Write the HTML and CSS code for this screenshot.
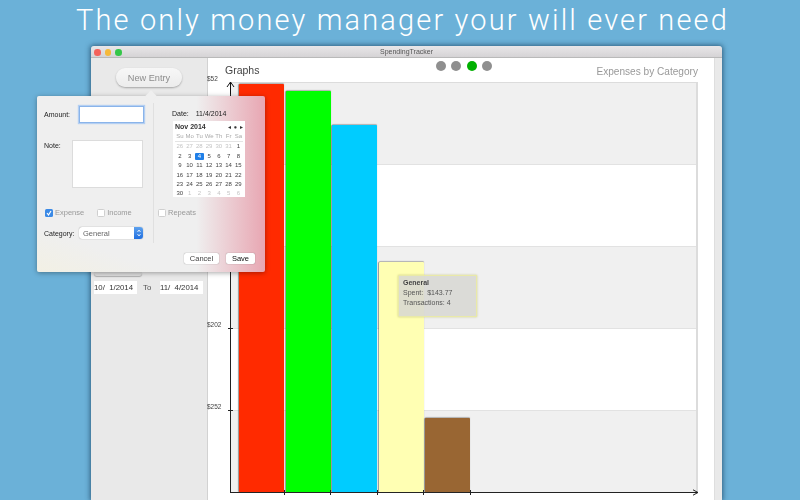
FILE: index.html
```html
<!DOCTYPE html>
<html lang="en">
<head>
  <meta charset="UTF-8">
  <title>SpendingTracker</title>
  <link rel="stylesheet" href="styles.css">
</head>
<body>
  <h1 class="headline">The only money manager your will ever need</h1>

  <div class="window">
    <div class="titlebar">
      <div class="lights">
        <span class="light red"></span>
        <span class="light yellow"></span>
        <span class="light green"></span>
      </div>
      <span class="title">SpendingTracker</span>
    </div>

    <div class="winBody">
      <aside class="sidebar">
        <button class="btnEntry">New Entry</button>
        <div class="hiddenBtn"></div>
        <div class="range">
          <span class="rangeField">10/ &nbsp;1/2014</span>
          <span class="rangeTo">To</span>
          <span class="rangeField">11/ &nbsp;4/2014</span>
        </div>
      </aside>

      <main class="content">
        <div class="chartHead">
          <span class="chartName">Graphs</span>
          <div class="dots">
            <span class="dot"></span>
            <span class="dot"></span>
            <span class="dot on"></span>
            <span class="dot"></span>
          </div>
          <span class="chartType">Expenses by Category</span>
        </div>

        <div class="plot">
          <div class="bands">
            <div class="band"></div>
            <div class="band"></div>
            <div class="band"></div>
            <div class="band"></div>
            <div class="band"></div>
          </div>
          <div class="bars">
            <div class="bar" style="height: 408px; background: #ff2a00"></div>
            <div class="bar" style="height: 401px; background: #00ff00"></div>
            <div class="bar" style="height: 367px; background: #00ccff"></div>
            <div class="bar" style="height: 230px; background: #ffffb3"></div>
            <div class="bar" style="height: 74px; background: #996633"></div>
          </div>

          <span class="yLabel l52">$52</span>
          <span class="yLabel l202">$202</span>
          <span class="yLabel l252">$252</span>
          <span class="yTick t202"></span>
          <span class="yTick t252"></span>
          <span class="xTick x1"></span>
          <span class="xTick x2"></span>
          <span class="xTick x3"></span>
          <span class="xTick x4"></span>
          <span class="xTick x5"></span>
          <svg class="arrowUp" width="9" height="13" viewBox="0 0 9 13"><path d="M1 6l3.5-5L8 6M4.5 1v12" fill="none" stroke="#111" stroke-width="1"/></svg>
          <svg class="arrowRight" width="7" height="7" viewBox="0 0 7 7"><path d="M1 .8L6 3.5 1 6.2" fill="none" stroke="#222" stroke-width="1"/></svg>

          <div class="tooltip">
            <strong>General</strong>
            <span>Spent: &nbsp;$143.77</span>
            <span>Transactions: 4</span>
          </div>
        </div>
      </main>

      <div class="strip"></div>
    </div>
  </div>

  <!-- popover from New Entry -->
  <div class="popover">
    <span class="popArrow"></span>
    <div class="popCols">
      <div class="colLeft">
        <div class="row">
          <label class="lblAmount">Amount:</label>
          <div class="inputAmount"></div>
        </div>
        <div class="row rowNote">
          <label class="lblNote">Note:</label>
          <div class="inputNote"></div>
        </div>
        <div class="row rowChecks">
          <span class="check checked">
            <svg width="8" height="8" viewBox="0 0 8 8"><path d="M2 4l1.5 2L6 2" fill="none" stroke="#fff" stroke-width="1.2"/></svg>
          </span>
          <span class="checkText">Expense</span>
          <span class="check income"></span>
          <span class="checkText">Income</span>
        </div>
        <div class="row rowCategory">
          <label class="lblAmount">Category:</label>
          <div class="select">
            <span>General</span>
            <span class="stepper">
              <svg width="8" height="12" viewBox="0 0 8 12"><path d="M2.5 5L4 3l1.5 2M2.5 7L4 9l1.5-2" fill="none" stroke="#fff" stroke-width="0.8"/></svg>
            </span>
          </div>
        </div>
      </div>

      <div class="colRight">
        <div class="dateRow">
          <label>Date:</label>
          <span>11/4/2014</span>
        </div>
        <div class="calendar">
          <div class="calHead">
            <strong>Nov 2014</strong>
            <span class="calNav">◂ ● ▸</span>
          </div>
          <div class="calGrid calDays">
            <span>Su</span><span>Mo</span><span>Tu</span><span>We</span><span>Th</span><span>Fr</span><span>Sa</span>
          </div>
          <div class="calGrid">
            <span class="off">26</span><span class="off">27</span><span class="off">28</span><span class="off">29</span><span class="off">30</span><span class="off">31</span><span>1</span>
            <span>2</span><span>3</span><span class="today">4</span><span>5</span><span>6</span><span>7</span><span>8</span>
            <span>9</span><span>10</span><span>11</span><span>12</span><span>13</span><span>14</span><span>15</span>
            <span>16</span><span>17</span><span>18</span><span>19</span><span>20</span><span>21</span><span>22</span>
            <span>23</span><span>24</span><span>25</span><span>26</span><span>27</span><span>28</span><span>29</span>
            <span>30</span><span class="off">1</span><span class="off">2</span><span class="off">3</span><span class="off">4</span><span class="off">5</span><span class="off">6</span>
          </div>
        </div>
        <div class="row rowRepeats">
          <span class="check"></span>
          <span class="checkText">Repeats</span>
        </div>
      </div>
    </div>
    <div class="popFooter">
      <button class="btnSmall">Cancel</button>
      <button class="btnSmall strong">Save</button>
    </div>
  </div>
</body>
</html>
```

FILE: styles.css
```css
* {
  box-sizing: border-box;
}

body {
  margin: 0;
  width: 800px;
  height: 500px;
  overflow: hidden;
  position: relative;
  background-color: #6bb1d8;
  font-family: "Liberation Sans", Arial, sans-serif;
  color: #333;
}

.headline {
  margin: 0;
  height: 46px;
  padding: 0 0 7px 5px;
  display: flex;
  justify-content: center;
  align-items: center;
  font-family: Roboto, sans-serif;
  font-size: 29px;
  font-weight: 300;
  letter-spacing: 2.15px;
  color: #fff;
  white-space: nowrap;
}

/* window */
.window {
  width: 631px;
  height: 454px;
  margin-left: 91px;
  display: flex;
  flex-direction: column;
  border-radius: 3px 3px 0 0;
  box-shadow: 0 0 5px 1px rgba(30, 70, 100, 0.75);
  filter: blur(0.3px);
}

.titlebar {
  height: 12px;
  flex: none;
  display: flex;
  justify-content: center;
  align-items: center;
  position: relative;
  background: linear-gradient(#e9e7e9, #d5d3d5);
  border-bottom: 1px solid #b9b9b9;
  border-radius: 3px 3px 0 0;
}

.lights {
  position: absolute;
  left: 3px;
  top: 3px;
  display: flex;
  gap: 4px;
}

.light {
  width: 6.5px;
  height: 6.5px;
  border-radius: 50%;
}

.red { background-color: #f4615a; }
.yellow { background-color: #f5b93a; }
.green { background-color: #34c648; }

.title {
  font-size: 7px;
  color: #555;
}

.winBody {
  flex: 1;
  display: flex;
  min-height: 0;
}

/* sidebar */
.sidebar {
  width: 117px;
  flex: none;
  display: flex;
  flex-direction: column;
  align-items: flex-start;
  background-color: #e9e9e9;
  border-right: 1px solid #d2d2d2;
}

.btnEntry {
  width: 66px;
  height: 19px;
  margin: 10px 0 0 25px;
  padding: 0;
  border: none;
  border-radius: 10px;
  background: linear-gradient(#f7f7f7, #ececec);
  box-shadow: 0 1px 2px rgba(0, 0, 0, 0.3);
  font-family: inherit;
  font-size: 9.2px;
  color: #8c8c8c;
}

.hiddenBtn {
  width: 48px;
  height: 4px;
  margin: 185px 0 0 3px;
  background-color: #dedede;
  border-radius: 0 0 3px 3px;
  box-shadow: 0 1px 1px rgba(0, 0, 0, 0.25);
}

.range {
  margin: 5px 0 0 3px;
  display: flex;
  align-items: center;
  font-size: 7.8px;
}

.rangeField {
  width: 43px;
  height: 13px;
  background-color: #fff;
  line-height: 14px;
  white-space: nowrap;
}

.rangeTo {
  width: 23px;
  padding-left: 6px;
  color: #555;
}

/* chart */
.content {
  width: 506px;
  flex: none;
  background-color: #fff;
}

.chartHead {
  height: 24px;
  padding: 3px 16px 0 17px;
  display: grid;
  grid-template-columns: 1fr auto 1fr;
}

.chartName {
  font-size: 10.5px;
  line-height: 18px;
  color: #444;
}

.dots {
  margin-left: 5px;
  display: flex;
  gap: 5.6px;
  height: 10px;
}

.dot {
  width: 10px;
  height: 10px;
  border-radius: 50%;
  background-color: #8f8f8f;
}

.dot.on {
  background-color: #00b000;
}

.chartType {
  text-align: right;
  font-size: 10.1px;
  line-height: 22px;
  color: #999;
}

.plot {
  width: 468px;
  height: 411px;
  margin-left: 22px;
  position: relative;
  display: grid;
  border-top: 1px solid #dcdcdc;
  border-right: 2px solid #dcdcdc;
}

.bands,
.bars {
  grid-area: 1 / 1;
}

.bands {
  margin-bottom: 1px;
  display: flex;
  flex-direction: column;
}

.band {
  flex: 1;
}

.band:nth-child(odd) {
  background-color: #f0f0f0;
}

.band + .band {
  border-top: 1px solid #e2e2e2;
}

.bars {
  padding-left: 8px;
  display: flex;
  align-items: flex-end;
  gap: 1.5px;
  border-left: 1px solid #222;
  border-bottom: 1px solid #222;
  margin-right: -2px;
}

.bar {
  width: 45px;
  border-radius: 1px 1px 0 0;
  box-shadow: -1px 0 1px rgba(80, 80, 80, 0.55), 0 -1px 1px rgba(80, 80, 80, 0.35);
}

.yLabel {
  position: absolute;
  font-size: 6.5px;
  color: #444;
}

.l52 { left: -23px; top: -8px; }
.l202 { left: -23px; top: 238px; }
.l252 { left: -23px; top: 320px; }

.yTick {
  position: absolute;
  left: -2px;
  width: 5px;
  height: 1px;
  background-color: #222;
}

.t202 { top: 245px; }
.t252 { top: 327px; }

.xTick {
  position: absolute;
  bottom: -2px;
  width: 1px;
  height: 5px;
  background-color: #222;
}

.x1 { left: 54px; }
.x2 { left: 100px; }
.x3 { left: 147px; }
.x4 { left: 193px; }
.x5 { left: 240px; }

.arrowUp {
  position: absolute;
  left: -4px;
  top: -2px;
}

.arrowRight {
  position: absolute;
  right: -3px;
  bottom: -3px;
}

.tooltip {
  position: absolute;
  left: 168px;
  top: 192px;
  width: 79px;
  height: 42px;
  padding: 2px 4px;
  display: flex;
  flex-direction: column;
  gap: 1px;
  background-color: rgba(215, 215, 210, 0.85);
  border: 1px solid #e9e9a8;
  box-shadow: 0 0 2px rgba(200, 200, 120, 0.8);
  font-size: 7px;
  line-height: 9px;
  color: #555;
}

.tooltip strong {
  color: #444;
}

.strip {
  flex: 1;
  background-color: #e9e9e9;
  border-left: 1px solid #dedede;
}

/* popover */
.popover {
  position: absolute;
  left: 37px;
  top: 96px;
  width: 228px;
  height: 176px;
  padding-top: 7px;
  border-radius: 2px;
  background: linear-gradient(90deg, rgba(240, 240, 240, 0) 70%, #e8a6b2 100%),
    linear-gradient(20deg, #f2f0e4 0, #efefef 18%);
  box-shadow: 0 1px 5px rgba(0, 0, 0, 0.35);
  font-size: 7px;
  filter: blur(0.3px);
}

.popArrow {
  position: absolute;
  left: 110px;
  top: -4px;
  width: 8px;
  height: 8px;
  background-color: #efefef;
  transform: rotate(45deg);
}

.popCols {
  display: flex;
  height: 140px;
  position: relative;
}

.colLeft {
  width: 117px;
  padding: 2px 0 0 7px;
  border-right: 1px solid #e0e0e0;
}

.colRight {
  flex: 1;
  padding: 5px 0 0 4px;
}

.row {
  display: flex;
  align-items: center;
}

label {
  color: #222;
}

.lblAmount {
  width: 35px;
  white-space: nowrap;
}

.inputAmount {
  width: 65px;
  height: 17px;
  margin-top: 1px;
  background-color: #fff;
  border: 1px solid #8ab4ea;
  box-shadow: 0 0 1px 1px #b4cff2;
}

.rowNote {
  margin-top: 17px;
  align-items: flex-start;
}

.lblNote {
  width: 28px;
  padding-top: 2px;
}

.inputNote {
  width: 71px;
  height: 48px;
  background-color: #fff;
  border: 1px solid #dcdcdc;
}

.rowChecks {
  margin-top: 20px;
  padding-left: 1px;
}

.check {
  width: 8px;
  height: 8px;
  flex: none;
  display: flex;
  background-color: #fff;
  border: 1px solid #cfcfcf;
  border-radius: 1.5px;
}

.check.checked {
  background-color: #3b8ae6;
  border: none;
}

.check.income {
  margin-left: 13px;
}

.checkText {
  margin-left: 2px;
  font-size: 7.5px;
  color: #999;
}

.rowCategory {
  margin-top: 10px;
}

.select {
  width: 64px;
  height: 12px;
  padding-left: 4px;
  display: flex;
  justify-content: space-between;
  align-items: center;
  background-color: #fff;
  border-radius: 3px;
  box-shadow: 0 0 1px rgba(0, 0, 0, 0.5);
  font-size: 7.5px;
  color: #666;
}

.stepper {
  width: 9px;
  height: 12px;
  display: flex;
  justify-content: center;
  background: linear-gradient(#5ea2ee, #1f6ee0);
  border-radius: 0 3px 3px 0;
}

.dateRow {
  height: 10px;
  margin-left: 14px;
  display: flex;
  gap: 7px;
  align-items: center;
  color: #222;
}

.calendar {
  width: 72px;
  height: 76px;
  margin: 3px 0 0 15px;
  padding: 0 2px;
  background-color: #fff;
}

.calHead {
  height: 11px;
  display: flex;
  justify-content: space-between;
  align-items: center;
  font-size: 7px;
  color: #333;
}

.calNav {
  font-size: 5.5px;
  word-spacing: 1.5px;
}

.calGrid {
  display: grid;
  grid-template-columns: repeat(7, 9.75px);
  grid-auto-rows: 9.4px;
  text-align: center;
  font-size: 6px;
  line-height: 9.4px;
  color: #444;
}

.calDays {
  border-bottom: 1px solid #e4e4e4;
  color: #aaa;
}

.off {
  color: #c4c4c4;
}

.today {
  margin: 1px 0;
  background-color: #1f7fe8;
  border-radius: 1px;
  line-height: 7.4px;
  color: #fff;
}

.rowRepeats {
  margin-top: 11px;
}

.popFooter {
  margin-top: 10px;
  padding-right: 10px;
  display: flex;
  justify-content: flex-end;
  gap: 7px;
}

.btnSmall {
  width: 35px;
  height: 11px;
  padding: 0;
  border: none;
  border-radius: 2px;
  background-color: #fff;
  box-shadow: 0 0 1px rgba(0, 0, 0, 0.5);
  font-family: inherit;
  font-size: 7.5px;
  color: #444;
}

.btnSmall.strong {
  width: 29px;
  color: #111;
}
```
